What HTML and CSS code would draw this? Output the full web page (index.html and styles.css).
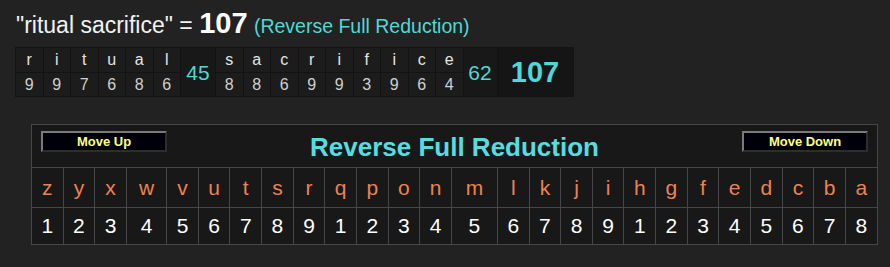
FILE: index.html
```html
<!DOCTYPE html>
<html>
<head>
<meta charset="utf-8">
<link rel="stylesheet" href="styles.css">
</head>
<body>
<div class="page">
  <div class="title">"ritual sacrifice" = <b class="total">107</b> <span class="cipher">(Reverse Full Reduction)</span></div>

  <table class="breakdown">
    <tr>
      <td class="l">r</td><td class="l">i</td><td class="l">t</td><td class="l">u</td><td class="l">a</td><td class="l">l</td>
      <td class="wsum" rowspan="2">45</td>
      <td class="l">s</td><td class="l">a</td><td class="l">c</td><td class="l">r</td><td class="l">i</td><td class="l">f</td><td class="l">i</td><td class="l">c</td><td class="l">e</td>
      <td class="wsum w2" rowspan="2">62</td>
      <td class="gsum" rowspan="2">107</td>
    </tr>
    <tr>
      <td class="n">9</td><td class="n">9</td><td class="n">7</td><td class="n">6</td><td class="n">8</td><td class="n">6</td>
      <td class="n">8</td><td class="n">8</td><td class="n">6</td><td class="n">9</td><td class="n">9</td><td class="n">3</td><td class="n">9</td><td class="n">6</td><td class="n">4</td>
    </tr>
  </table>

  <table class="chart">
    <tr>
      <td class="head" colspan="26">
        <div class="headbar">
          <button class="mv">Move Up</button>
          <span class="ctitle">Reverse Full Reduction</span>
          <button class="mv">Move Down</button>
        </div>
      </td>
    </tr>
    <tr class="letters">
      <td>z</td><td>y</td><td>x</td><td>w</td><td>v</td><td>u</td><td>t</td><td>s</td><td>r</td><td>q</td><td>p</td><td>o</td><td>n</td><td>m</td><td>l</td><td>k</td><td>j</td><td>i</td><td>h</td><td>g</td><td>f</td><td>e</td><td>d</td><td>c</td><td>b</td><td>a</td>
    </tr>
    <tr class="nums">
      <td>1</td><td>2</td><td>3</td><td>4</td><td>5</td><td>6</td><td>7</td><td>8</td><td>9</td><td>1</td><td>2</td><td>3</td><td>4</td><td>5</td><td>6</td><td>7</td><td>8</td><td>9</td><td>1</td><td>2</td><td>3</td><td>4</td><td>5</td><td>6</td><td>7</td><td>8</td>
    </tr>
  </table>
</div>
</body>
</html>
```

FILE: styles.css
```css
html, body {
  margin: 0;
  padding: 0;
  background: #222222;
}

.page {
  width: 890px;
  height: 267px;
  font-family: "Liberation Sans", Arial, sans-serif;
  color: #ffffff;
}

.title {
  padding: 9px 0 0 16px;
  height: 47px;
  box-sizing: border-box;
  font-size: 23px;
  line-height: 28px;
  color: #f2f2f2;
  white-space: nowrap;
}

.title .total {
  font-size: 29px;
  font-weight: bold;
  color: #ffffff;
}

.title .cipher {
  font-size: 19.5px;
  color: #4fd8d8;
}

.breakdown {
  margin: 0 0 0 15px;
  border-collapse: collapse;
  border: 1px solid #141414;
  background: #1c1c1c;
}

.breakdown td {
  border: 1px solid #131313;
  padding: 0;
  text-align: center;
  width: 26.5px;
}

.breakdown .l {
  height: 24px;
  font-size: 16px;
  color: #e4e4e4;
  line-height: 24px;
}

.breakdown .n {
  height: 23px;
  font-size: 16px;
  color: #d0d0d0;
  line-height: 23px;
}

.breakdown .wsum {
  width: 34px;
  font-size: 21px;
  color: #4fd8d8;
  background: #181818;
  padding-top: 2px;
}

.breakdown .w2 {
  width: 33px;
}

.breakdown .gsum {
  width: 75px;
  font-size: 29px;
  font-weight: bold;
  color: #4fd8d8;
  background: #151515;
}

.chart {
  margin: 27px 0 0 31px;
  width: 847px;
  border-collapse: collapse;
  background: #181818;
  border: 1px solid #474747;
}

.chart td {
  border: 1px solid #474747;
  padding: 0;
  text-align: center;
}

.chart .head {
  height: 43px;
  vertical-align: top;
  padding: 6px 9px 0 9px;
  box-sizing: border-box;
}

.headbar {
  display: flex;
  justify-content: space-between;
  align-items: flex-start;
}

.mv {
  width: 126px;
  height: 21px;
  margin: 0;
  padding: 0;
  background: #00000a;
  color: #ffff88;
  font-family: "Liberation Sans", Arial, sans-serif;
  font-size: 13px;
  font-weight: bold;
  line-height: 17px;
  border: 2px solid;
  border-color: #7a7a7a #2e2e2e #2e2e2e #7a7a7a;
}

.ctitle {
  font-size: 26px;
  font-weight: bold;
  line-height: 30px;
  color: #55dde0;
  padding-top: 1px;
}

.letters td {
  height: 39px;
  font-size: 21px;
  color: #ee8250;
}

.nums td {
  height: 36px;
  font-size: 21px;
  color: #ffffff;
}
```
